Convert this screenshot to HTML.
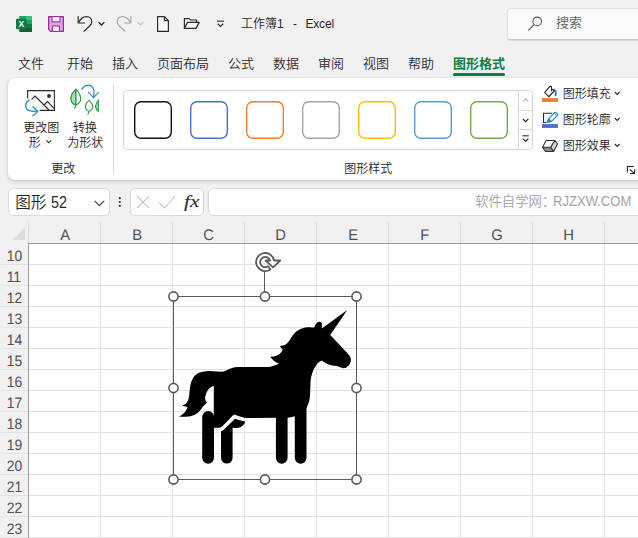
<!DOCTYPE html>
<html lang="zh-CN">
<head>
<meta charset="utf-8">
<title>工作簿1 - Excel</title>
<style>
*{box-sizing:border-box;margin:0;padding:0}
html,body{width:638px;height:538px;overflow:hidden;background:#f1f1f1}
body{position:relative;font-family:"Liberation Sans","Noto Sans CJK SC",sans-serif;color:#262626;font-size:12px;font-weight:350}
.abs{position:absolute}
.t{position:absolute;white-space:nowrap;line-height:1}
svg{position:absolute;overflow:visible}
/* title */
#title{left:241px;top:17px;font-size:12px;line-height:14px;color:#262626}
#search{left:507px;top:8px;width:140px;height:32px;background:#fafafa;border:1px solid #e2e2e2;border-bottom-color:#c9c9c9;border-radius:4px;box-shadow:0 1px 1px rgba(0,0,0,.10)}
#searchtxt{left:556px;top:16px;font-size:13px;line-height:14px;color:#5f5f5f}
/* tabs */
.tab{top:55.5px;font-size:13px;line-height:16px;color:#2b2b2b}
#tabsel{color:#107c41;font-weight:bold}
#tabline{left:453px;top:72.5px;width:52px;height:3px;border-radius:1.5px;background:#107c41}
/* ribbon */
#ribbon{left:8px;top:78px;width:640px;height:102px;background:#fff;border-radius:7px 0 0 7px;box-shadow:0 2px 4px rgba(0,0,0,.15),0 0 2px rgba(0,0,0,.10)}
.rl{font-size:12px;line-height:14px;color:#262626}
.sw{position:absolute;top:101px;width:38px;height:38px;border:1.3px solid #000;border-radius:7px;background:#fff}
#gal{left:123px;top:90px;width:410px;height:60px;border:1px solid #d6d6d6;border-radius:4px;background:#fff}
/* formula bar */
.fb{position:absolute;top:188px;height:27.5px;background:#fff;border:1px solid #dadada;border-radius:5px}
/* grid */
#sheet{left:0;top:222px;width:638px;height:316px}
.ch{position:absolute;top:227.6px;width:72px;text-align:center;font-size:15.4px;line-height:16px;color:#505050;text-rendering:geometricPrecision}
.rh{position:absolute;left:0;width:28px;text-align:center;font-size:15.1px;line-height:16px;color:#505050;margin-top:1.4px;margin-left:0;text-rendering:geometricPrecision}
.rh span{display:inline-block;transform:scale(.92,1);transform-origin:50% 8%}.ch span{display:inline-block;transform:scaleX(.96)}
</style>
</head>
<body>

<!-- ===== title bar ===== -->
<svg id="ic-title" width="638" height="50" style="left:0;top:0" viewBox="0 0 638 50" fill="none">
  <!-- excel logo -->
  <rect x="19.5" y="16" width="12.5" height="16" rx="1" fill="#21a366"/>
  <rect x="19.5" y="16" width="6.3" height="4" fill="#21a366"/>
  <rect x="25.8" y="16" width="6.2" height="4" fill="#33c481"/>
  <rect x="19.5" y="20" width="6.3" height="4" fill="#107c41"/>
  <rect x="25.8" y="20" width="6.2" height="4" fill="#21a366"/>
  <rect x="19.5" y="24" width="6.3" height="4" fill="#185c37"/>
  <rect x="25.8" y="24" width="6.2" height="4" fill="#107c41"/>
  <rect x="19.5" y="28" width="12.5" height="4" fill="#185c37"/>
  <rect x="16" y="18.7" width="10.6" height="10.6" rx="1" fill="#107c41"/>
  <text x="21.300" y="27.100" text-anchor="middle" font-family="Liberation Sans, sans-serif" font-weight="bold" font-size="8.600" fill="#fff">X</text>
  <!-- save -->
  <path d="M48.6 16.6 H63.4 V31.4 H50.6 L48.6 29.4 Z" fill="#dea3de" stroke="#9a2a9e" stroke-width="1.2" stroke-linejoin="round"/>
  <rect x="52" y="16.6" width="8" height="5.2" fill="#fdfbfd" stroke="#9a2a9e" stroke-width="1"/>
  <rect x="52.6" y="26" width="6.8" height="5.4" fill="#fdfbfd" stroke="#9a2a9e" stroke-width="1"/>
  <!-- undo -->
  <path d="M78.2 16.2 V23 H85" stroke="#2b2b2b" stroke-width="1.2"/>
  <path d="M78.6 22.6 C80.5 18.6 83.6 16.6 86.6 16.6 C90 16.6 91.8 19.2 91.8 21.6 C91.8 23.4 91 24.6 89.8 25.8 L83.6 31.6" stroke="#2b2b2b" stroke-width="1.2"/>
  <path d="M98.6 22.2 L101.5 25 L104.4 22.2" stroke="#2b2b2b" stroke-width="1.3"/>
  <!-- redo (disabled) -->
  <path d="M130.8 16.2 V23 H124" stroke="#a6a6a6" stroke-width="1.2"/>
  <path d="M130.4 22.6 C128.5 18.6 125.4 16.6 122.4 16.6 C119 16.6 117.2 19.2 117.2 21.6 C117.2 23.4 118 24.6 119.2 25.8 L125.4 31.6" stroke="#a6a6a6" stroke-width="1.2"/>
  <path d="M137.6 22.2 L140.5 25 L143.4 22.2" stroke="#c4c4c4" stroke-width="1.2"/>
  <!-- new -->
  <path d="M157.6 16.6 H164.4 L168.4 20.6 V31.4 H157.6 Z" fill="#fafafa" stroke="#2b2b2b" stroke-width="1.2" stroke-linejoin="round"/>
  <path d="M164.4 16.6 V20.6 H168.4" stroke="#2b2b2b" stroke-width="1.1"/>
  <!-- open -->
  <path d="M184.4 28.4 V18.6 H189 L190.6 20 H196.6 V22.4" stroke="#2b2b2b" stroke-width="1.2" stroke-linejoin="round"/>
  <path d="M184.4 28.4 L187.6 22.4 H199.2 L196 28.4 Z" fill="#fafafa" stroke="#2b2b2b" stroke-width="1.2" stroke-linejoin="round"/>
  <!-- qat customize -->
  <path d="M217 21.2 H224" stroke="#2b2b2b" stroke-width="1.1"/>
  <path d="M217.8 23.8 L220.5 26.4 L223.2 23.8" stroke="#2b2b2b" stroke-width="1.2"/>
  <!-- search magnifier (drawn over search box later) -->
</svg>
<div class="t" id="title">工作簿1</div><div class="t" id="title2" style="left:293px;top:17px;font-size:12px;line-height:14px;color:#262626">-</div><div class="t" id="title3" style="left:305.5px;top:17px;font-size:12px;line-height:14px;color:#262626;letter-spacing:-.2px">Excel</div>
<div class="abs" id="search"></div>
<svg width="20" height="20" style="left:524px;top:12px" viewBox="524 12 20 20" fill="none">
  <circle cx="537.2" cy="21.4" r="4.3" stroke="#555" stroke-width="1.1"/>
  <path d="M534 24.6 L528.4 30.4" stroke="#555" stroke-width="1.2"/>
</svg>
<div class="t" id="searchtxt">搜索</div>

<!-- ===== tabs ===== -->
<div class="t tab" style="left:18px">文件</div>
<div class="t tab" style="left:67px">开始</div>
<div class="t tab" style="left:112px">插入</div>
<div class="t tab" style="left:157px">页面布局</div>
<div class="t tab" style="left:228px">公式</div>
<div class="t tab" style="left:273px">数据</div>
<div class="t tab" style="left:318px">审阅</div>
<div class="t tab" style="left:363px">视图</div>
<div class="t tab" style="left:408px">帮助</div>
<div class="t tab" id="tabsel" style="left:453px">图形格式</div>
<div class="abs" id="tabline"></div>

<!-- ===== ribbon ===== -->
<div class="abs" id="ribbon"></div>
<div class="abs" style="left:113px;top:84px;width:1px;height:90px;background:#d9d9d9"></div>
<div class="abs" id="gal"></div>
<svg width="400" height="44" style="left:130px;top:98px" viewBox="130 98 400 44"><rect x="134.7" y="101.700" width="36.600" height="36.600" rx="6.300" fill="#fff" stroke="#111" stroke-width="1.400"/><rect x="190.7" y="101.700" width="36.600" height="36.600" rx="6.300" fill="#fff" stroke="#4472c4" stroke-width="1.400"/><rect x="246.7" y="101.700" width="36.600" height="36.600" rx="6.300" fill="#fff" stroke="#ed7d31" stroke-width="1.400"/><rect x="302.7" y="101.700" width="36.600" height="36.600" rx="6.300" fill="#fff" stroke="#a5a5a5" stroke-width="1.400"/><rect x="358.7" y="101.700" width="36.600" height="36.600" rx="6.300" fill="#fff" stroke="#ffc000" stroke-width="1.400"/><rect x="414.7" y="101.700" width="36.600" height="36.600" rx="6.300" fill="#fff" stroke="#5b9bd5" stroke-width="1.400"/><rect x="470.7" y="101.700" width="36.600" height="36.600" rx="6.300" fill="#fff" stroke="#70ad47" stroke-width="1.400"/></svg>
<div class="abs" style="left:518px;top:90px;width:1px;height:60px;background:#d6d6d6"></div>
<div class="abs" style="left:519px;top:110px;width:14px;height:1px;background:#d6d6d6"></div>
<div class="abs" style="left:519px;top:129px;width:14px;height:1px;background:#d6d6d6"></div>

<svg id="ic-rib" width="638" height="110" style="left:0;top:78px" viewBox="0 78 638 110" fill="none">
  <!-- change graphic icon -->
  <path d="M27.6 98.4 V90.6 H54.4 V110.4 H39.6" stroke="#2b2b2b" stroke-width="1.1" fill="#fafafa"/>
  <path d="M31.6 99.4 L35 96 L49 110 M44 105 L47.4 101.6 L54.4 108.6" stroke="#2b2b2b" stroke-width="1.1"/>
  <circle cx="49" cy="96" r="1.9" fill="#2b2b2b"/>
  <path d="M29.6 99.6 C26 101.6 24.6 105.6 26.4 108.6 C28.2 111.4 32 111.6 37.4 111.2" stroke="#1e8ad6" stroke-width="1.3"/>
  <path d="M32.6 106.6 L37.8 111.2 L32.4 116.4" stroke="#1e8ad6" stroke-width="1.3"/>
  <!-- convert to shape icon -->
  <path d="M75.8 89.4 C72.4 92.6 71 95.6 71 98.4 C71 101.6 73 104 75.8 105 C78.6 104 80.6 101.6 80.6 98.4 C80.6 95.6 79.2 92.6 75.8 89.4 Z" fill="#fafafa" stroke="#2e9a47" stroke-width="1.1"/>
  <path d="M75.8 89.4 C72.4 92.6 71 95.6 71 98.4 C71 101.6 73 104 75.8 105 Z" fill="#a9dfae" stroke="#2e9a47" stroke-width="1.1"/>
  <path d="M75.8 89.4 V105.4 L74.6 108.6" stroke="#2e9a47" stroke-width="1.1"/>
  <path d="M89 100.4 C86.6 102.6 85.4 104.6 85.4 106.4 C85.4 108.8 87 110.6 89 111.2 C91 110.6 92.8 108.8 92.8 106.4 C92.8 104.6 91.4 102.6 89 100.4 Z" fill="#fafafa" stroke="#2e9a47" stroke-width="1.1"/>
  <path d="M89 111.2 L87.8 114.6" stroke="#2e9a47" stroke-width="1.1"/>
  <path d="M98.4 100.4 C96.4 102.6 95.6 104.4 95.6 106.2 C95.6 108.6 96.8 110.4 98.4 111.4 Z" fill="#a9dfae" stroke="#2e9a47" stroke-width="1.1"/>
  <path d="M81.6 89.8 C83.4 86.6 86 85.2 88.4 85.2 C91.8 85.2 94 88.4 94 91.8 L93.6 97.2" stroke="#1e8ad6" stroke-width="1.2"/>
  <path d="M88.2 92.2 L93.6 97.6 L98.6 92.2" stroke="#1e8ad6" stroke-width="1.2"/>
  <!-- chevron under 形 -->
  <path d="M46.4 140.4 L48.8 142.8 L51.2 140.4" stroke="#2b2b2b" stroke-width="1.1"/>
  <!-- gallery scroll chevrons -->
  <path d="M522.8 101.6 L525.6 98.8 L528.4 101.6" stroke="#b8b8b8" stroke-width="1.1"/>
  <path d="M522.8 118.8 L525.6 121.6 L528.4 118.8" stroke="#2b2b2b" stroke-width="1.2"/>
  <path d="M522.4 135.8 H528.8" stroke="#2b2b2b" stroke-width="1.1"/>
  <path d="M522.8 138.6 L525.6 141.4 L528.4 138.6" stroke="#2b2b2b" stroke-width="1.2"/>
  <!-- fill icon -->
  <rect x="542" y="98.100" width="15.900" height="3.800" fill="#ed7d31"/>
  <path d="M551.500 88.800 L554.100 90.900 L548.900 96.600 L544.800 92.500 L549.300 87 C550 86 551.500 86 551.500 87.300 V91.600" fill="none" stroke="#2b2b2b" stroke-width="1.050" stroke-linejoin="round"/>
  <path d="M544.800 92.500 L549.600 87 L551.500 88.800 L554.100 90.900 L548.900 96.600 Z" fill="#fafafa" stroke="none"/>
  <path d="M551.500 88.800 L554.100 90.900 L548.900 96.600 L544.800 92.500 L549.300 87 C550 86 551.500 86 551.500 87.300 V91.600" fill="none" stroke="#2b2b2b" stroke-width="1.050" stroke-linejoin="round"/>
  <path d="M553.800 89.700 C555.600 90.400 556.200 92.200 555.500 95.300" stroke="#1a72c7" stroke-width="1.800" stroke-linecap="round"/>
  <!-- outline icon -->
  <rect x="542" y="124.100" width="15.900" height="3.800" fill="#4472c4"/>
  <path d="M552 113.300 H543.500 V122.500 H546" stroke="#2b2b2b" stroke-width="1.100"/>
  <path d="M547 122.500 L548.700 118.700 L554.400 112.800 C555.600 111.600 558.600 114.200 557.400 115.600 L551.500 121.300 Z" fill="#fff" stroke="#1e8ad6" stroke-width="1.150" stroke-linejoin="round"/>
  <path d="M547 122.500 L548.700 118.700 L551.500 121.300 Z" fill="#1e8ad6" stroke="#1e8ad6" stroke-width="1" stroke-linejoin="round"/>
  <path d="M554.600 113.600 L556.600 115.500" stroke="#1e8ad6" stroke-width="1"/>
  <!-- effects icon -->
  <path d="M554.800 140.500 L557.600 143.800 L553.600 151.500 L550.600 147.300 Z" fill="#d4d4d4" stroke="#333" stroke-width="1.100" stroke-linejoin="round"/>
  <path d="M542.600 147.300 H550.600 L553.600 151.500 H545.400 Z" fill="#8c8c8c" stroke="#333" stroke-width="1.100" stroke-linejoin="round"/>
  <path d="M546.100 140.500 H554.800 L550.600 147.300 H542.600 Z" fill="#fcfcfc" stroke="#333" stroke-width="1.100" stroke-linejoin="round"/>
  <!-- dropdown chevrons -->
  <path d="M614.8 92 L617.2 94.4 L619.6 92" stroke="#2b2b2b" stroke-width="1.1"/>
  <path d="M614.8 118 L617.2 120.4 L619.6 118" stroke="#2b2b2b" stroke-width="1.1"/>
  <path d="M614.8 144 L617.2 146.4 L619.6 144" stroke="#2b2b2b" stroke-width="1.1"/>
  <!-- dialog launcher -->
  <path d="M627.400 172.600 V166.400 H633.900" stroke="#222" stroke-width="1.050"/>
  <path d="M629.800 169.400 L634.400 173.300 M630 173.500 H634.600 V169.200" stroke="#222" stroke-width="1.050"/>
</svg>

<div class="t rl" style="left:23.3px;top:120.7px">更改图</div>
<div class="t rl" style="left:28.8px;top:136px">形</div>
<div class="t rl" style="left:73px;top:120.7px">转换</div>
<div class="t rl" style="left:67.2px;top:136px">为形状</div>
<div class="t rl" style="left:51.2px;top:161.7px">更改</div>
<div class="t rl" style="left:344.2px;top:161.6px">图形样式</div>
<div class="t rl" style="left:562.7px;top:87px">图形填充</div>
<div class="t rl" style="left:562.7px;top:113px">图形轮廓</div>
<div class="t rl" style="left:562.7px;top:139px">图形效果</div>

<!-- ===== formula bar ===== -->
<div class="fb" style="left:8px;width:102px"></div>
<div class="fb" style="left:130px;width:74px"></div>
<div class="fb" style="left:208px;width:440px"></div>
<div class="t" style="left:15.2px;top:194px;font-size:15.6px;line-height:18px;color:#262626">图形 <span style="display:inline-block;transform:scaleX(.92);transform-origin:0 50%">52</span></div>
<div class="t" style="left:475px;top:194px;font-size:13.4px;line-height:16px;color:#a3a3a3">软件自学网：</div><div class="t" style="left:553.2px;top:193.4px;font-size:14.5px;line-height:16px;color:#a3a3a3;transform:scaleX(.9);transform-origin:0 50%">RJZXW.COM</div>
<svg width="200" height="30" style="left:90px;top:188px" viewBox="90 188 200 30" fill="none">
  <path d="M94.6 200.8 L99.4 205.6 L104.2 200.8" stroke="#444" stroke-width="1.2"/>
  <circle cx="119.8" cy="198.2" r="1.100" fill="#333"/><circle cx="119.8" cy="202" r="1.100" fill="#333"/><circle cx="119.8" cy="205.8" r="1.100" fill="#333"/>
  <path d="M137 196.2 L149.2 208.2 M149.2 196.2 L137 208.2" stroke="#c2c2c2" stroke-width="1.1"/>
  <path d="M159 202.6 L164.6 208 L175 196.4" stroke="#c2c2c2" stroke-width="1.1"/>
</svg>
<div class="t" style="left:184px;top:191px;font-family:'Liberation Serif',serif;font-style:italic;font-size:17.5px;line-height:20px;color:#2a2a2a;-webkit-text-stroke:.12px #2a2a2a;transform:scaleX(1.22);transform-origin:0 50%">fx</div>

<!-- ===== sheet ===== -->
<div class="abs" style="left:29px;top:244px;width:609px;height:294px;background:#fff"></div>
<svg id="grid" width="638" height="316" style="left:0;top:222px" viewBox="0 222 638 316" shape-rendering="crispEdges">
  <path d="M12.6 240 L25 227.6 V240 Z" fill="#dcdcdc" shape-rendering="auto"/>
  <g stroke="#dedede" stroke-width="1">
    <path d="M100.5 222V243M172.5 222V243M244.5 222V243M316.5 222V243M388.5 222V243M460.5 222V243M532.5 222V243M604.5 222V243" stroke="#dddddd"/>
    <path d="M100.5 244V538M172.5 244V538M244.5 244V538M316.5 244V538M388.5 244V538M460.5 244V538M532.5 244V538M604.5 244V538" stroke="#e1e1e1"/>
    <path d="M29 264.5H638M29 285.5H638M29 306.5H638M29 327.5H638M29 348.5H638M29 369.5H638M29 390.5H638M29 411.5H638M29 432.5H638M29 453.5H638M29 474.5H638M29 495.5H638M29 516.5H638M29 537.5H638" stroke="#e1e1e1"/>
    <path d="M0 264.5H28M0 285.5H28M0 306.5H28M0 327.5H28M0 348.5H28M0 369.5H28M0 390.5H28M0 411.5H28M0 432.5H28M0 453.5H28M0 474.5H28M0 495.5H28M0 516.5H28M0 537.5H28" stroke="#e4e4e4"/>
  </g>
  <path d="M28.5 243.5H638" stroke="#9c9c9c" stroke-width="1"/>
  <path d="M28.5 243V538" stroke="#9c9c9c" stroke-width="1"/><path d="M28.500 223V243" stroke="#dcdcdc" stroke-width="1"/>
</svg>
<div class="ch" style="left:29px"><span>A</span></div>
<div class="ch" style="left:101px"><span>B</span></div>
<div class="ch" style="left:173px"><span>C</span></div>
<div class="ch" style="left:245px"><span>D</span></div>
<div class="ch" style="left:317px"><span>E</span></div>
<div class="ch" style="left:389px"><span>F</span></div>
<div class="ch" style="left:461px"><span>G</span></div>
<div class="ch" style="left:533px"><span>H</span></div>
<div class="rh" style="top:248px"><span>10</span></div>
<div class="rh" style="top:269px"><span>11</span></div>
<div class="rh" style="top:290px"><span>12</span></div>
<div class="rh" style="top:311px"><span>13</span></div>
<div class="rh" style="top:332px"><span>14</span></div>
<div class="rh" style="top:353px"><span>15</span></div>
<div class="rh" style="top:374px"><span>16</span></div>
<div class="rh" style="top:395px"><span>17</span></div>
<div class="rh" style="top:416px"><span>18</span></div>
<div class="rh" style="top:437px"><span>19</span></div>
<div class="rh" style="top:458px"><span>20</span></div>
<div class="rh" style="top:479px"><span>21</span></div>
<div class="rh" style="top:500px"><span>22</span></div>
<div class="rh" style="top:521px"><span>23</span></div>

<!-- ===== unicorn shape + selection ===== -->
<svg id="shape" width="638" height="538" style="left:0;top:0" viewBox="0 0 638 538" fill="none">
  <!-- far rear leg -->
  <path fill="#000" d="M202.200 416.900 A5.900 5.900 0 0 1 214 416.900 L214 457.800 A5.900 5.900 0 0 1 202.200 457.800 Z"/>
  <!-- body -->
  <path fill="#000" d="M347.3 310 L330.2 335.1 L347.5 353.2 C350 355.8 351.2 358 350.8 360.5 C350.4 363.5 349.5 365 348 366 C346.5 367.5 345 368.3 343.4 368.2 C341 367.9 339 366.8 336.9 366.1 C333 365.5 331 365.2 328.5 364.4 C325.5 363.3 323.5 361.8 321.9 360.6 C319.5 361.5 318 362.8 316.8 364.4 C314.8 367 313.5 369.5 312.7 371.9 C311.5 375 311 377.5 310.6 380.3 C310.3 386 310.3 392 309.9 396.7 C309.5 400.5 308.7 403 307.7 405.1 L306.5 408.4 L306.5 457.8 A5.85 5.85 0 0 1 294.8 457.8 L294.8 416.2 C292 417 290 417.4 287.6 417.6 L287.6 457.8 A5.85 5.85 0 0 1 275.9 457.8 L275.9 417.8 L250 418 C246.5 418.1 243.5 417.5 240.8 416.7 C238.500 416 236.500 415.200 234.500 414.400 C233.800 414.700 233.300 415.100 232.800 415.600 L223.800 424.700 C222.600 425.900 221.300 427.300 219.400 427.700 L213.800 427.800 L213.800 386 C212 386.400 211 387 210.1 387.700 C208.500 389 207.500 390.500 206.800 391.900 C205.800 394 205.200 396.500 205.100 398.500 C205.300 400.500 206 401.800 207.100 402.700 L205.900 403.600 C204.800 404.800 203.800 405.800 202.600 406.900 C200.800 409.500 199 411.800 196.700 413.600 C194 415.500 191.500 416.300 188.400 416.600 C185 416.900 182 416.900 178.700 416.600 C181.500 415.300 183.500 413.800 185 411.900 C186.200 410.300 187 408.800 187.500 406.900 C185.500 406.700 183.500 406.300 181.700 405.600 C183.800 405 185.500 404 186.700 402.700 C188.200 400.500 188.900 398 189.200 395.200 C189.500 392 189.800 388.500 190.400 385.200 C191 382.200 192 379.800 193.400 377.600 C195 375.200 197.200 373.600 200 372.600 C202.500 371.600 205.500 371.100 208.500 371 L221.800 371.800 C223 371.700 224 371.400 225.200 371 C228 369.500 230.500 368.200 233.500 367.500 C236 367 238 366.900 240 366.900 L268.500 366.900 C271 366.500 273 366 275.200 365.200 C276.600 364.800 277.800 364.200 278.900 363.500 C275.500 362.500 272.500 360 270.200 356.800 C272.500 356.900 274.800 356.500 276.900 355.600 C278.500 354.900 279.800 353.900 281 352.600 C281.800 351.600 282.400 350.500 282.700 349.300 C281.700 348.400 280.700 347.300 279.900 345.900 C282 345.800 284.200 345.300 286.100 344.300 C287.800 343 289 341.300 290.200 339.300 C291.300 337.500 292.300 335.700 293.600 334.200 C295 332.500 296.700 331.100 298.600 330.100 C300.700 328.800 303 328 305.300 327.500 C307.500 327.200 309.800 327.200 312 327.500 L314.300 327.600 C314.800 324.500 316.800 322 319.300 321.700 C320.500 321.700 321.500 322.400 321.900 323.400 L321.900 328.400 Z"/>
  <!-- near rear leg -->
  <path fill="#000" d="M221 457.800 L221 431.200 C222 431 222.800 430.600 223.500 430 L234.300 419.400 C234.700 419 235.100 418.800 235.600 418.900 C237.300 419.300 239 419.900 240.800 420.400 L245.600 421.800 C244.600 423.500 243.500 424.800 242.300 425.900 C241.300 426.700 240.300 427.100 239.200 427.400 C238 427.800 237 428 236 428 C234.800 428 233.600 427.800 232.600 427.400 L232.600 457.800 A5.800 5.800 0 0 1 221 457.800 Z"/>
  <!-- selection frame -->
  <rect x="173.500" y="296.500" width="183" height="183" stroke="#5a5a5a" stroke-width="1"/>
  <path d="M264.500 272 V292" stroke="#5a5a5a" stroke-width="1"/>
  <g fill="#fff" stroke="#595959" stroke-width="1.600">
    <circle cx="173.500" cy="296.500" r="4.600"/><circle cx="265" cy="296.500" r="4.600"/><circle cx="356.500" cy="296.500" r="4.600"/>
    <circle cx="173.500" cy="388" r="4.600"/><circle cx="356.500" cy="388" r="4.600"/>
    <circle cx="173.500" cy="479.500" r="4.600"/><circle cx="265" cy="479.500" r="4.600"/><circle cx="356.500" cy="479.500" r="4.600"/>
  </g>
  <!-- rotation handle -->
  <g id="rot">
    <path d="M270.390 269.510 A9.050 9.050 0 1 1 274.100 260.500 L280.200 260.500 L273.100 267.400 L265.600 260.500 L270.040 260.500 A5.100 5.100 0 1 0 268.130 266.280 Z" fill="#fff" stroke="#5a5a5a" stroke-width="1.800" stroke-linejoin="round"/>
  </g>
</svg>

</body>
</html>
